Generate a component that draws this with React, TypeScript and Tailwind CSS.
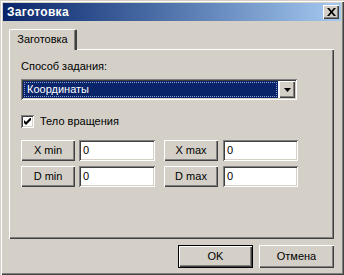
const raised =
  "shadow-[inset_1px_1px_0_#ffffff,inset_-1px_-1px_0_#404040,inset_-2px_-2px_0_#808080]";
const sunken =
  "shadow-[inset_1px_1px_0_#808080,inset_-1px_-1px_0_#ffffff,inset_2px_2px_0_#404040,inset_-2px_-2px_0_#d4d0c8]";

const Field = ({ value, width }: { value: string; width: string }) => (
  <div className={`${width} h-[21px] bg-white ${sunken} flex items-center pl-[4px] text-[11px] text-black`}>
    {value}
  </div>
);

const SmallButton = ({ label }: { label: string }) => (
  <div className={`w-[54px] h-[21px] bg-[#d4d0c8] ${raised} flex items-center justify-center text-[11px] text-black`}>
    {label}
  </div>
);

export default function App() {
  return (
    <div
      className="w-[344px] h-[275px] bg-[#d4d0c8] p-[3px] flex flex-col shadow-[inset_1px_1px_0_#d4d0c8,inset_2px_2px_0_#ffffff,inset_-1px_-1px_0_#404040,inset_-2px_-2px_0_#808080] select-none"
      style={{ fontFamily: '"Liberation Sans", Arial, sans-serif' }}
    >
      {/* title bar */}
      <div className="h-[18px] bg-gradient-to-r from-[#0a246a] to-[#a6caf0] flex items-center justify-between pl-[4px] pr-[2px]">
        <span className="text-white font-bold text-[12px] tracking-[0.3px]">Заготовка</span>
        <div className={`w-[16px] h-[14px] bg-[#d4d0c8] ${raised} flex items-center justify-center pb-[1px]`}>
          <svg width="9" height="8" viewBox="0 0 9 8">
            <path d="M0 0h2.2l2.3 2.7L6.8 0H9L5.6 4 9 8H6.8L4.5 5.3 2.2 8H0l3.4-4z" fill="#000" />
          </svg>
        </div>
      </div>

      {/* tabs */}
      <div className="mt-[8px] pl-[6px] flex flex-col">
        <div className="flex h-[21px] relative z-10">
          <div className="w-[68px] h-[21px] bg-[#d4d0c8] border-l border-t border-white border-r-2 border-r-[#404040] rounded-tl-[2px] rounded-tr-[2px] flex items-center justify-center text-[11px] text-black pb-[1px] shadow-[inset_-1px_0_0_#808080]">
            Заготовка
          </div>
        </div>
        <div className="w-[325px] h-[190px] -mt-[1px] bg-[#d4d0c8] border-l border-t border-white shadow-[inset_-1px_-1px_0_#404040,inset_-2px_-2px_0_#808080] pl-[11px] pt-[9px] flex flex-col">
          <div className="text-[11px] text-black h-[14px] leading-[14px]">Способ задания:</div>

          {/* combo */}
          <div className={`mt-[6px] w-[276px] h-[21px] bg-white ${sunken} p-[2px] flex`}>
            <div className="flex-1 bg-[#0a246a] p-[1px] mr-[1px]">
              <div className="h-full border border-dotted border-[#8da0d0] flex items-center pl-[2px] text-[11px] text-white">
                Координаты
              </div>
            </div>
            <div className={`w-[16px] bg-[#d4d0c8] ${raised} flex items-center justify-center`}>
              <svg width="7" height="4" viewBox="0 0 7 4">
                <path d="M0 0h7L3.5 4z" fill="#000" />
              </svg>
            </div>
          </div>

          {/* checkbox */}
          <div className="mt-[15px] flex items-center h-[13px]">
            <div className={`w-[13px] h-[13px] bg-white ${sunken} flex items-center justify-center`}>
              <svg width="7" height="7" viewBox="0 0 7 7">
                <path d="M0 2v3l2 2 5-5V-1L2 4z" fill="#000" />
              </svg>
            </div>
            <span className="ml-[6px] text-[11px] text-black">Тело вращения</span>
          </div>

          {/* rows */}
          <div className="mt-[12px] flex flex-col gap-[5px]">
            <div className="flex items-center">
              <SmallButton label="X min" />
              <div className="ml-[4px]"><Field value="0" width="w-[76px]" /></div>
              <div className="ml-[9px]"><SmallButton label="X max" /></div>
              <div className="ml-[5px]"><Field value="0" width="w-[75px]" /></div>
            </div>
            <div className="flex items-center">
              <SmallButton label="D min" />
              <div className="ml-[4px]"><Field value="0" width="w-[76px]" /></div>
              <div className="ml-[9px]"><SmallButton label="D max" /></div>
              <div className="ml-[5px]"><Field value="0" width="w-[75px]" /></div>
            </div>
          </div>
        </div>
      </div>

      {/* dialog buttons */}
      <div className="mt-[6px] flex justify-end gap-[6px] pr-[7px]">
        <div className="w-[75px] h-[23px] border border-black">
          <div className={`w-full h-full bg-[#d4d0c8] ${raised} flex items-center justify-center text-[11px] text-black`}>
            OK
          </div>
        </div>
        <div className={`w-[75px] h-[23px] bg-[#d4d0c8] ${raised} flex items-center justify-center text-[11px] text-black`}>
          Отмена
        </div>
      </div>
    </div>
  );
}
